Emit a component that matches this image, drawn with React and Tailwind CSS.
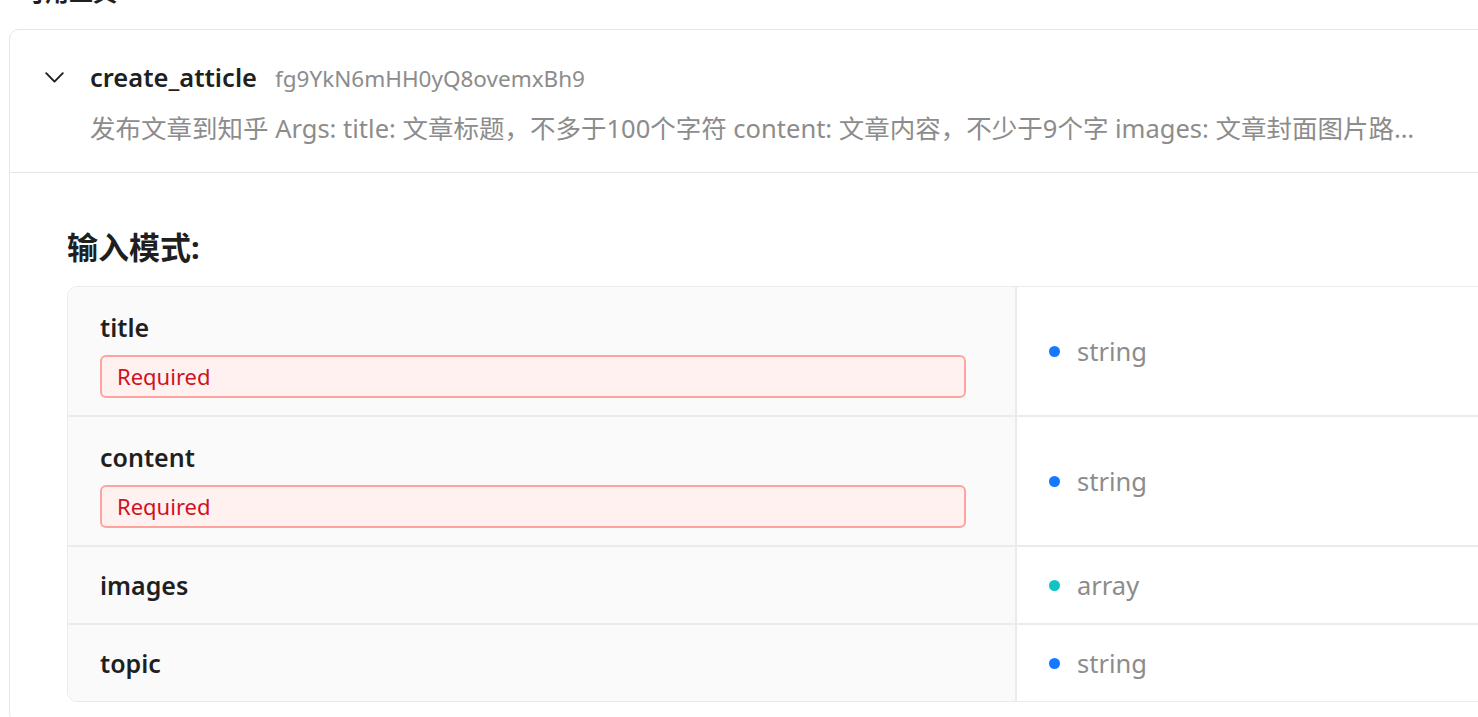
import React from "react";

const FIELDS = [
  { name: "title", required: true, type: "string" },
  { name: "content", required: true, type: "string" },
  { name: "images", required: false, type: "array" },
  { name: "topic", required: false, type: "string" },
];

const TYPE_DOT = {
  string: "bg-[#1677ff]",
  array: "bg-[#13c2c2]",
};

function Chevron() {
  return (
    <svg width="19" height="11" viewBox="0 0 19 11" fill="none" className="shrink-0">
      <path d="M1.2 1.2 L9.5 9.6 L17.8 1.2" stroke="#1f1f1f" strokeWidth="1.9" strokeLinecap="round" strokeLinejoin="round" />
    </svg>
  );
}

export default function App() {
  return (
    <div
      className="w-[1478px] h-[717px] overflow-hidden bg-white text-[#1f1f1f]"
      style={{ fontFamily: '"Noto Sans", "Noto Sans CJK SC", sans-serif' }}
    >
      <div className="pl-[9px]">
        {/* Section title, scrolled partly off screen */}
        <h2 className="mt-[-26px] pl-[12px] text-[24px] leading-[36px] font-semibold">可用工具</h2>

        {/* Tool card */}
        <div className="mt-[19px] w-[1540px] rounded-[10px] border border-[#e6e6e6] bg-white">
          {/* Header */}
          <div className="flex items-start gap-[26px] pl-[35px] pt-[29px] pb-[26px] border-b border-[#e6e6e6]">
            <div className="h-[36px] flex items-center">
              <Chevron />
            </div>
            <div className="min-w-0">
              <div className="flex items-baseline gap-[18px]">
                <span className="text-[25.5px] leading-[36px] font-semibold">create_atticle</span>
                <span className="text-[22.5px] leading-[36px] text-[#8c8c8c]">fg9YkN6mHH0yQ8ovemxBh9</span>
              </div>
              <p className="mt-[13px] w-[1332px] truncate text-[25.5px] leading-[36px] text-[#8c8c8c]">
                发布文章到知乎 Args: title: 文章标题，不多于100个字符 content: 文章内容，不少于9个字 images: 文章封面图片路径列表 topic: 文章话题
              </p>
            </div>
          </div>

          {/* Body */}
          <div className="pl-[57px] pt-[53px] pb-[20px]">
            <h3 className="text-[31px] leading-[42px] font-bold">输入模式:</h3>
            <div className="mt-[18px] rounded-[10px] border border-[#ebebeb] overflow-hidden">
              {FIELDS.map((f, i) => (
                <div key={f.name} className={`flex ${i > 0 ? "border-t-2 border-[#ebebeb]" : ""}`}>
                  <div
                    className={`w-[949px] shrink-0 bg-[#fafafa] border-r-2 border-[#ebebeb] pl-[32px] pr-[49px] ${
                      f.required ? "pt-[22px] pb-[17px]" : "py-[20px]"
                    }`}
                  >
                    <div className="text-[25px] leading-[36px] font-semibold">{f.name}</div>
                    {f.required && (
                      <div className="mt-[10px] h-[43px] flex items-center rounded-[6px] border-2 border-[#ffa39e] bg-[#fff1f0] pl-[15px] text-[22px] text-[#cf1322]">
                        Required
                      </div>
                    )}
                  </div>
                  <div className="flex-1 flex items-center gap-[17px] pl-[32px]">
                    <span className={`w-[11px] h-[11px] rounded-full ${TYPE_DOT[f.type]}`} />
                    <span className="text-[25.5px] leading-[36px] text-[#8c8c8c]">{f.type}</span>
                  </div>
                </div>
              ))}
            </div>
          </div>
        </div>
      </div>
    </div>
  );
}
